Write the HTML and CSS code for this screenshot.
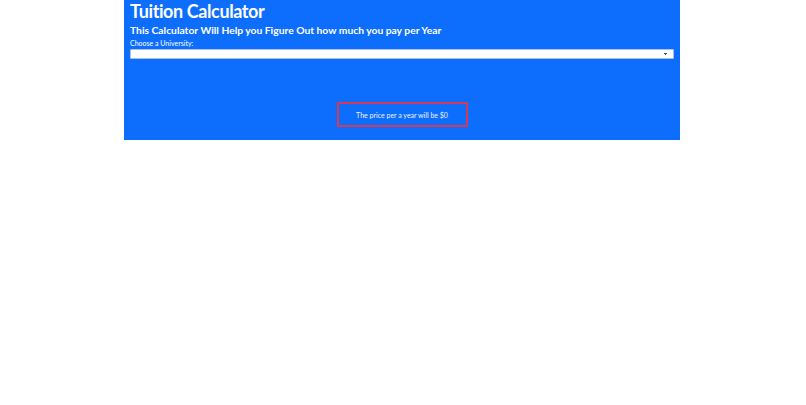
FILE: index.html
```html
<!DOCTYPE html>
<html lang="en">
<head>
<meta charset="utf-8">
<title>Tuition Calculator</title>
<link rel="stylesheet" href="styles.css">
</head>
<body>
<main class="calc">
  <h1 class="title">Tuition Calculator</h1>
  <h2 class="subtitle">This Calculator Will Help you Figure Out how much you pay per Year</h2>
  <label class="label" for="uni">Choose a University:</label>
  <select id="uni" class="select"><option></option></select>
  <div class="result-wrap">
    <div class="result">The price per a year will be $0</div>
  </div>
</main>
</body>
</html>
```

FILE: styles.css
```css
html, body {
  margin: 0;
  padding: 0;
  background: #ffffff;
}
body {
  font-family: Lato, "Liberation Sans", sans-serif;
  color: #ffffff;
}
.calc {
  width: 556px;
  height: 140px;
  margin: 0 0 0 124px;
  background: #0d6efd;
  padding: 0 6px;
  box-sizing: border-box;
  display: flex;
  flex-direction: column;
}
.title {
  margin: 0;
  font-size: 18px;
  font-weight: 700;
  line-height: 22px;
  letter-spacing: -0.4px;
}
.subtitle {
  margin: 0;
  padding-top: 2px;
  font-size: 10.3px;
  font-weight: 700;
  line-height: 13px;
}
.label {
  font-size: 7px;
  line-height: 10px;
  padding-top: 1px;
}
.select {
  display: block;
  width: 100%;
  height: 10px;
  margin: 1px 0 0;
  padding: 0;
  border: 1px solid #a9c2e8;
  border-radius: 1px;
  background: #ffffff;
  font-size: 6px;
  box-sizing: border-box;
  appearance: none;
  background-image: linear-gradient(45deg, transparent 50%, #555 50%), linear-gradient(135deg, #555 50%, transparent 50%);
  background-position: calc(100% - 7px) 3px, calc(100% - 5px) 3px;
  background-size: 2px 2px, 2px 2px;
  background-repeat: no-repeat;
}
.result-wrap {
  display: flex;
  justify-content: center;
  padding-top: 43px;
}
.result {
  width: 131px;
  height: 25px;
  box-sizing: border-box;
  border: 2px solid #d43a55;
  display: flex;
  align-items: center;
  justify-content: center;
  font-size: 7px;
  color: #eef3ff;
}
```
